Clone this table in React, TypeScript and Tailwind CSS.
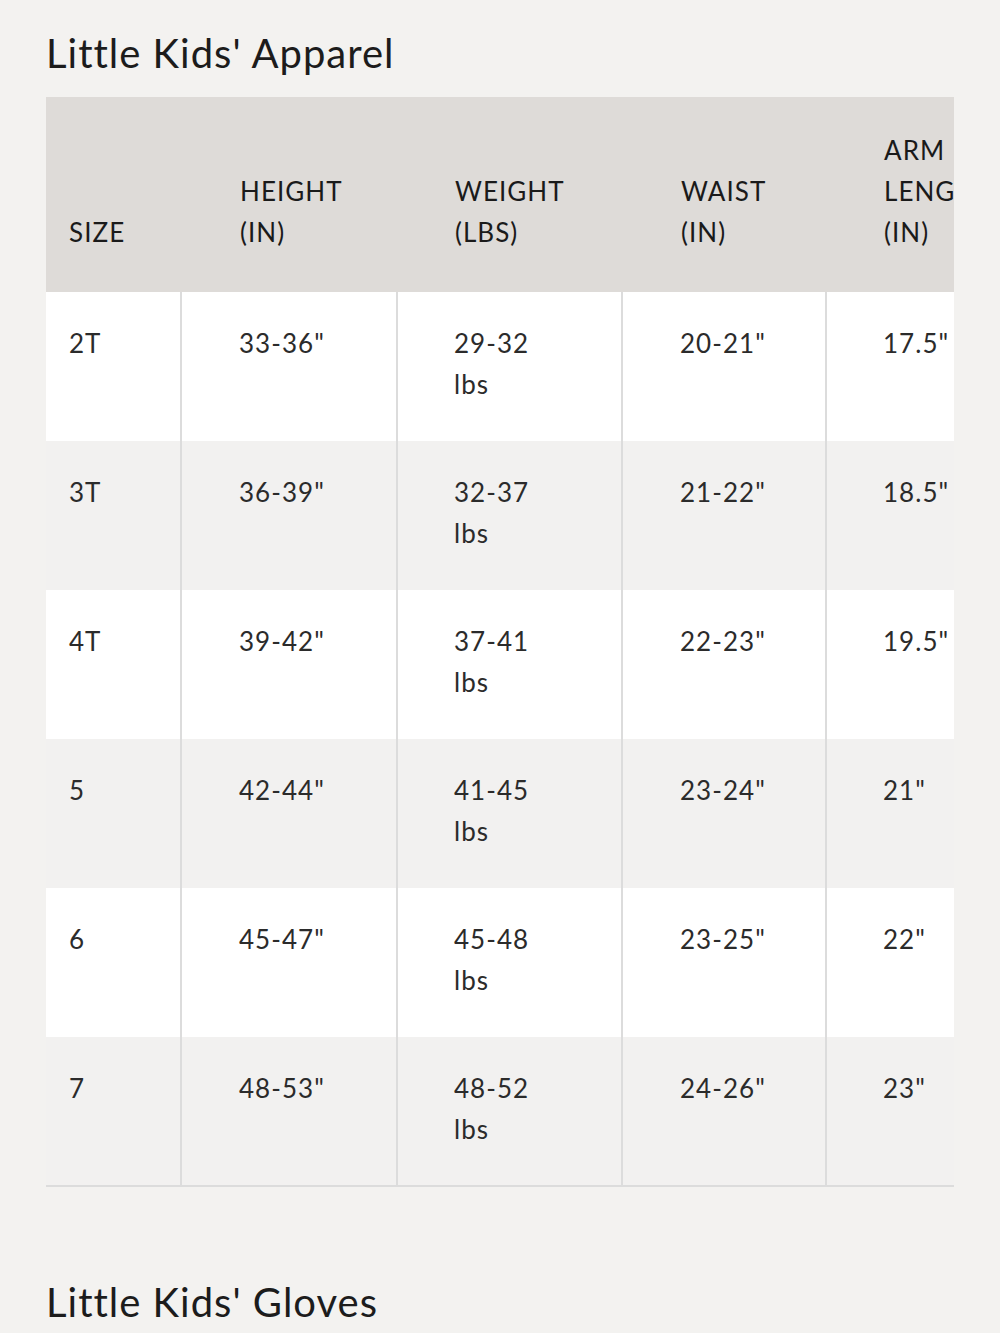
const rows = [
  { size: "2T", height: '33-36"', weight: "29-32", waist: '20-21"', arm: '17.5"' },
  { size: "3T", height: '36-39"', weight: "32-37", waist: '21-22"', arm: '18.5"' },
  { size: "4T", height: '39-42"', weight: "37-41", waist: '22-23"', arm: '19.5"' },
  { size: "5", height: '42-44"', weight: "41-45", waist: '23-24"', arm: '21"' },
  { size: "6", height: '45-47"', weight: "45-48", waist: '23-25"', arm: '22"' },
  { size: "7", height: '48-53"', weight: "48-52", waist: '24-26"', arm: '23"' },
];

const font = { fontFamily: "Lato, 'Noto Sans', sans-serif" };

export default function App() {
  return (
    <div className="min-h-[1333px] bg-[#f3f2f0] px-[46px] text-[#1c1c1c]" style={font}>
      <h2 className="pt-[27px] text-[40px] leading-[52px] font-normal tracking-[0.025em]">Little Kids' Apparel</h2>
      <div className="mt-[18px] w-[908px] overflow-hidden">
        <table className="w-[980px] table-fixed border-collapse text-[26px] leading-[41px] tracking-[0.04em]">
          <colgroup>
            <col className="w-[135px]" />
            <col className="w-[216px]" />
            <col className="w-[225px]" />
            <col className="w-[204px]" />
            <col className="w-[200px]" />
          </colgroup>
          <thead>
            <tr className="h-[195px] bg-[#dedbd8] text-[#1a1a1a]">
              <th className="pb-[39px] pl-[23px] text-left align-bottom font-normal">SIZE</th>
              <th className="pb-[39px] pl-[59px] text-left align-bottom font-normal">HEIGHT<br />(IN)</th>
              <th className="pb-[39px] pl-[58px] text-left align-bottom font-normal">WEIGHT<br />(LBS)</th>
              <th className="pb-[39px] pl-[59px] text-left align-bottom font-normal">WAIST<br />(IN)</th>
              <th className="pb-[39px] pl-[58px] text-left align-bottom font-normal whitespace-nowrap">ARM<br />LENGTH<br />(IN)</th>
            </tr>
          </thead>
          <tbody className="text-[#2b2b2b]">
            {rows.map((r, i) => (
              <tr key={r.size} className={`h-[149px] ${i % 2 === 0 ? "bg-white" : "bg-[#f2f1f0]"} ${i === rows.length - 1 ? "border-b-2 border-[#dcdcdc]" : ""}`}>
                <td className="pt-[31px] pl-[23px] align-top">{r.size}</td>
                <td className="border-l-2 border-[#dcdcdc] pt-[31px] pl-[57px] align-top">{r.height}</td>
                <td className="border-l-2 border-[#dcdcdc] pt-[31px] pl-[56px] align-top">{r.weight}<br />lbs</td>
                <td className="border-l-2 border-[#dcdcdc] pt-[31px] pl-[57px] align-top">{r.waist}</td>
                <td className="border-l-2 border-[#dcdcdc] pt-[31px] pl-[56px] align-top">{r.arm}</td>
              </tr>
            ))}
          </tbody>
        </table>
      </div>
      <h2 className="mt-[89px] text-[40px] leading-[52px] font-normal tracking-[0.025em]">Little Kids' Gloves</h2>
    </div>
  );
}
